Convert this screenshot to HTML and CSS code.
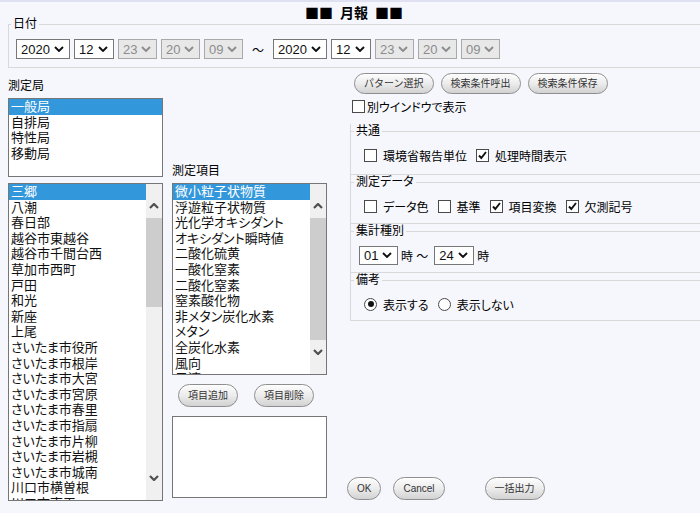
FILE: index.html
```html
<!DOCTYPE html>
<html lang="ja">
<head>
<meta charset="utf-8">
<title>月報</title>
<link rel="stylesheet" href="styles.css">
</head>
<body>
<div class="page">
  <h1 class="title"><span>■■</span><span>月報</span><span>■■</span></h1>

  <fieldset class="fs date-fs">
    <legend>日付</legend>
    <div class="date-row">
      <span class="sel w54">2020<svg class="chev" viewBox="0 0 10 6"><path d="M1 1l4 4 4-4"/></svg></span>
      <span class="sel w40">12<svg class="chev" viewBox="0 0 10 6"><path d="M1 1l4 4 4-4"/></svg></span>
      <span class="sel w39 off">23<svg class="chev" viewBox="0 0 10 6"><path d="M1 1l4 4 4-4"/></svg></span>
      <span class="sel w39 off">20<svg class="chev" viewBox="0 0 10 6"><path d="M1 1l4 4 4-4"/></svg></span>
      <span class="sel w39 off">09<svg class="chev" viewBox="0 0 10 6"><path d="M1 1l4 4 4-4"/></svg></span>
      <span class="tilde">～</span>
      <span class="sel w54">2020<svg class="chev" viewBox="0 0 10 6"><path d="M1 1l4 4 4-4"/></svg></span>
      <span class="sel w40">12<svg class="chev" viewBox="0 0 10 6"><path d="M1 1l4 4 4-4"/></svg></span>
      <span class="sel w39 off">23<svg class="chev" viewBox="0 0 10 6"><path d="M1 1l4 4 4-4"/></svg></span>
      <span class="sel w39 off">20<svg class="chev" viewBox="0 0 10 6"><path d="M1 1l4 4 4-4"/></svg></span>
      <span class="sel w39 off">09<svg class="chev" viewBox="0 0 10 6"><path d="M1 1l4 4 4-4"/></svg></span>
    </div>
  </fieldset>

  <div class="main">
    <div class="left-top">
      <div class="label">測定局</div>
      <div class="listbox kind-list">
        <div class="items">
          <div class="item on">一般局</div>
          <div class="item">自排局</div>
          <div class="item">特性局</div>
          <div class="item">移動局</div>
        </div>
      </div>
    </div>

    <div class="mid-label">測定項目</div>

    <div class="listbox station-list">
      <div class="items">
        <div class="item on">三郷</div>
        <div class="item">八潮</div>
        <div class="item">春日部</div>
        <div class="item">越谷市東越谷</div>
        <div class="item">越谷市千間台西</div>
        <div class="item">草加市西町</div>
        <div class="item">戸田</div>
        <div class="item">和光</div>
        <div class="item">新座</div>
        <div class="item">上尾</div>
        <div class="item">さいたま市役所</div>
        <div class="item">さいたま市根岸</div>
        <div class="item">さいたま市大宮</div>
        <div class="item">さいたま市宮原</div>
        <div class="item">さいたま市春里</div>
        <div class="item">さいたま市指扇</div>
        <div class="item">さいたま市片柳</div>
        <div class="item">さいたま市岩槻</div>
        <div class="item">さいたま市城南</div>
        <div class="item">川口市横曽根</div>
        <div class="item">川口市南平</div>
      </div>
      <div class="sb">
        <div class="sb-up"><svg class="sb-chev" viewBox="0 0 10 6"><path d="M1 5l4-4 4 4"/></svg></div>
        <div class="thumb thumb-st"></div>
        <div class="sb-fill"></div>
        <div class="sb-down"><svg class="sb-chev" viewBox="0 0 10 6"><path d="M1 1l4 4 4-4"/></svg></div>
      </div>
    </div>

    <div class="mid">
      <div class="listbox param-list">
        <div class="items">
          <div class="item on">微小粒子状物質</div>
          <div class="item">浮遊粒子状物質</div>
          <div class="item">光化学オキシダント</div>
          <div class="item">オキシダント瞬時値</div>
          <div class="item">二酸化硫黄</div>
          <div class="item">一酸化窒素</div>
          <div class="item">二酸化窒素</div>
          <div class="item">窒素酸化物</div>
          <div class="item">非メタン炭化水素</div>
          <div class="item">メタン</div>
          <div class="item">全炭化水素</div>
          <div class="item">風向</div>
          <div class="item">風速</div>
        </div>
        <div class="sb">
          <div class="sb-up"><svg class="sb-chev" viewBox="0 0 10 6"><path d="M1 5l4-4 4 4"/></svg></div>
          <div class="thumb thumb-pa"></div>
          <div class="sb-fill"></div>
          <div class="sb-down"><svg class="sb-chev" viewBox="0 0 10 6"><path d="M1 1l4 4 4-4"/></svg></div>
        </div>
      </div>
      <div class="mid-btns">
        <button class="btn btn-tall">項目追加</button>
        <button class="btn btn-tall">項目削除</button>
      </div>
      <div class="memo"></div>
    </div>

    <div class="right">
      <div class="top-btns">
        <button class="btn">パターン選択</button>
        <button class="btn">検索条件呼出</button>
        <button class="btn">検索条件保存</button>
      </div>
      <div class="win-row">
        <span class="cb"></span><span>別ウインドウで表示</span>
      </div>

      <div class="groups">
        <fieldset class="grp grp-common">
          <legend>共通</legend>
          <div class="row">
            <span class="opt"><span class="cb"></span>環境省報告単位</span>
            <span class="opt"><span class="cb"><svg class="tick" viewBox="0 0 11 11"><path d="M2 5.5l2.3 2.5 4.7-6"/></svg></span>処理時間表示</span>
          </div>
        </fieldset>
        <fieldset class="grp">
          <legend>測定データ</legend>
          <div class="row">
            <span class="opt"><span class="cb"></span>データ色</span>
            <span class="opt"><span class="cb"></span>基準</span>
            <span class="opt"><span class="cb"><svg class="tick" viewBox="0 0 11 11"><path d="M2 5.5l2.3 2.5 4.7-6"/></svg></span>項目変換</span>
            <span class="opt"><span class="cb"><svg class="tick" viewBox="0 0 11 11"><path d="M2 5.5l2.3 2.5 4.7-6"/></svg></span>欠測記号</span>
          </div>
        </fieldset>
        <fieldset class="grp">
          <legend>集計種別</legend>
          <div class="row">
            <span class="sel small w39">01<svg class="chev" viewBox="0 0 10 6"><path d="M1 1l4 4 4-4"/></svg></span>
            <span class="unit">時 ～</span>
            <span class="sel small w40 sel-gap">24<svg class="chev" viewBox="0 0 10 6"><path d="M1 1l4 4 4-4"/></svg></span>
            <span class="unit">時</span>
          </div>
        </fieldset>
        <fieldset class="grp grp-note">
          <legend>備考</legend>
          <div class="row">
            <span class="opt"><span class="rd on"></span>表示する</span>
            <span class="opt"><span class="rd"></span>表示しない</span>
          </div>
        </fieldset>
      </div>

      <div class="bottom-btns">
        <button class="btn btn-tall">OK</button>
        <button class="btn btn-tall btn-cancel">Cancel</button>
        <button class="btn btn-tall btn-bulk">一括出力</button>
      </div>
    </div>
  </div>
</div>
</body>
</html>
```

FILE: styles.css
```css
html, body {
  margin: 0;
  padding: 0;
  overflow: hidden;
}

body {
  width: 700px;
  height: 511px;
  background: #f6f7fd;
  border-top: 2px solid #e0e0f3;
  font-family: "Liberation Sans", "Noto Sans CJK JP", sans-serif;
  font-size: 12px;
  color: #000;
  font-feature-settings: "palt";
}

.page {
  padding-left: 8px;
}

.title {
  margin: 0;
  padding-top: 3px;
  height: 15px;
  line-height: 15px;
  font-family: "Noto Sans CJK JP", sans-serif;
  font-feature-settings: normal;
  font-size: 14px;
  font-weight: bold;
  display: flex;
  justify-content: center;
  gap: 7px;
}

/* fieldsets */
.fs {
  margin: 0;
  border: 1px solid #d9d9d9;
  min-width: 0;
}

.fs legend,
.grp legend {
  padding: 0 2px;
  font-size: 12px;
  line-height: 14px;
}

.date-fs {
  margin: -3px -20px 0 0;
  padding: 8px 0 8px 7px;
}

.date-fs legend {
  margin-left: -5px;
}

.date-row {
  display: flex;
  align-items: center;
  gap: 4px;
}

.tilde {
  margin: 0 5px;
  font-size: 12px;
}

/* select-like boxes */
.sel {
  box-sizing: border-box;
  display: flex;
  align-items: center;
  justify-content: space-between;
  height: 20px;
  padding: 0 5px 0 4px;
  border: 1px solid #777;
  background: #fff;
  font-family: "Liberation Sans", sans-serif;
  font-size: 13px;
  color: #111;
}

.sel.off {
  background: #e8e8e8;
  border-color: #a9a9a9;
  color: #8c8c8c;
}

.sel.small {
  height: 19px;
}

.w54 { width: 54px; }
.w40 { width: 40px; }
.w39 { width: 39px; }

.chev {
  width: 10px;
  height: 6px;
  fill: none;
  stroke: currentColor;
  stroke-width: 1.9;
}

/* main grid */
.main {
  display: grid;
  grid-template-columns: 155px 155px 1fr;
  grid-template-rows: auto 1fr;
  column-gap: 9px;
  row-gap: 6px;
  margin-top: 5px;
}

.left-top {
  grid-column: 1;
  grid-row: 1;
}

.label {
  margin-top: 5px;
  line-height: 16px;
}

.mid-label {
  grid-column: 2;
  grid-row: 1;
  align-self: end;
  line-height: 16px;
  margin-bottom: -2px;
}

/* list boxes */
.listbox {
  box-sizing: border-box;
  display: flex;
  border: 1px solid #767676;
  background: #fff;
  overflow: hidden;
  font-size: 13px;
  line-height: 15.6px;
}

.kind-list {
  height: 79px;
  margin-top: 4px;
}

.station-list {
  grid-column: 1;
  grid-row: 2;
  height: 318px;
}

.items {
  flex: 1;
  min-width: 0;
}

.item {
  padding-left: 2px;
  white-space: nowrap;
  color: #111;
}

.item.on {
  background: #3398db;
  color: #fff;
}

.sb {
  width: 16px;
  flex: none;
  display: flex;
  flex-direction: column;
  background: #f0f0f0;
}

.sb-up,
.sb-down {
  height: 34px;
  display: flex;
  justify-content: center;
  box-sizing: border-box;
}

.sb-up {
  padding-top: 19px;
}

.sb-down {
  padding-top: 9px;
}

.sb-chev {
  width: 10px;
  height: 6px;
  fill: none;
  stroke: #4f4f4f;
  stroke-width: 2.2;
}

.thumb {
  background: #cdcdcd;
}

.thumb-st { height: 89px; }
.thumb-pa { height: 123px; }

.sb-fill {
  flex: 1;
}

/* middle column */
.mid {
  grid-column: 2;
  grid-row: 2;
  display: flex;
  flex-direction: column;
}

.param-list {
  height: 192px;
}

.mid-btns {
  display: flex;
  gap: 16px;
  margin: 9px 0 0 6px;
}

.memo {
  box-sizing: border-box;
  height: 82px;
  margin-top: 9px;
  border: 1px solid #767676;
  background: #fff;
}

/* buttons */
.btn {
  box-sizing: border-box;
  height: 21px;
  padding: 0 9px;
  border: 1px solid #8e8e8e;
  border-radius: 12px;
  background: linear-gradient(#fdfdfd, #ececec 50%, #d2d2d2);
  box-shadow: inset 0 1px 0 #fff;
  font-family: "Liberation Sans", "Noto Sans CJK JP", sans-serif;
  font-size: 10px;
  color: #333;
  line-height: 19px;
}

.btn-tall {
  height: 23px;
  line-height: 21px;
}

/* right column */
.right {
  grid-column: 3;
  grid-row: 1 / 3;
  padding-left: 11px;
  display: flex;
  flex-direction: column;
}

.top-btns {
  display: flex;
  gap: 7px;
  margin-left: 7px;
}

.win-row {
  display: flex;
  align-items: center;
  gap: 2px;
  height: 16px;
  margin: 4px 0 0 5px;
}

.cb {
  box-sizing: border-box;
  width: 13px;
  height: 13px;
  flex: none;
  border: 1px solid #4a4a4a;
  background: #fff;
  display: inline-flex;
  align-items: center;
  justify-content: center;
}

.tick {
  width: 11px;
  height: 11px;
  fill: none;
  stroke: #111;
  stroke-width: 1.9;
}

.groups {
  margin: 10px -20px 0 3px;
  border-left: 1px solid #d9d9d9;
}

.grp {
  margin: 0;
  min-width: 0;
  padding: 7px 0 7px 0;
  border: 1px solid #d9d9d9;
  border-left: 0;
}

.grp legend {
  margin-left: 3px;
}

.grp-common {
  padding-bottom: 9px;
}

.grp-note {
  padding-bottom: 6px;
}

.row {
  display: flex;
  align-items: center;
  height: 20px;
  padding-left: 8px;
}

.opt {
  display: flex;
  align-items: center;
}

.opt + .opt {
  margin-left: 4px;
}

.opt .cb,
.opt .rd {
  margin: 0 6px 0 5px;
}

.rd {
  box-sizing: border-box;
  width: 13px;
  height: 13px;
  flex: none;
  border: 1px solid #4a4a4a;
  border-radius: 50%;
  background: #fff;
  display: inline-flex;
  align-items: center;
  justify-content: center;
}

.rd.on::after {
  content: "";
  width: 6px;
  height: 6px;
  border-radius: 50%;
  background: #111;
}

.unit {
  margin-left: 3px;
}

.sel-gap {
  margin-left: 6px;
}

.bottom-btns {
  display: flex;
  margin-top: auto;
  margin-bottom: 1px;
}

.btn-cancel {
  margin-left: 12px;
}

.btn-bulk {
  margin-left: 40px;
}
```
